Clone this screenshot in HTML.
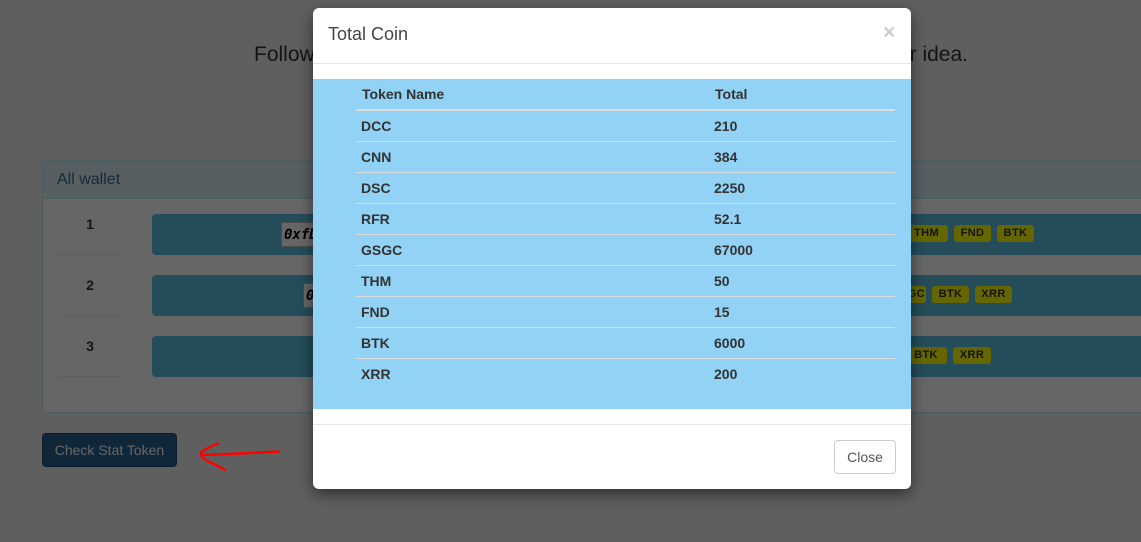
<!DOCTYPE html>
<html>
<head>
<meta charset="utf-8">
<style>
html,body{margin:0;padding:0;width:1141px;height:542px;overflow:hidden;background:#eee;font-family:"Liberation Sans",sans-serif;}
.a{position:absolute;white-space:nowrap}
.panel{left:42px;top:160px;width:1120px;height:253px;background:#fff;border:1px solid #bce8f1;border-radius:4px;overflow:hidden;box-sizing:border-box}
.phead{left:0;top:0;width:100%;height:38px;background:#d9edf7;border-bottom:1px solid #bce8f1;color:#31708f;font-size:16px;line-height:37px;padding-left:14px;box-sizing:border-box}
.bar{left:152px;width:1000px;height:41px;background:#5bc0de;border-radius:4px}
.num{left:58px;width:64px;text-align:center;font-size:14px;font-weight:bold;color:#333;line-height:20px}
.sep{left:58px;width:64px;height:1px;background:#eee}
.addr{height:25px;background:#fff;border:1px solid #bbb;box-sizing:border-box;font-family:"DejaVu Sans Mono","Liberation Mono",monospace;font-weight:bold;font-style:italic;font-size:14px;line-height:24px;color:#000;padding-left:2px;width:60px;overflow:hidden}
.badge{height:17px;background:#ff0;border-radius:3px;font-size:11px;font-weight:bold;line-height:17px;color:#333;text-align:center;letter-spacing:.4px}
.btn{left:42px;top:433px;width:135px;height:34px;background:#286090;border:1px solid #204d74;border-radius:4px;color:#fff;font-size:14px;line-height:32px;text-align:center;box-sizing:border-box}
.backdrop{left:0;top:0;width:1141px;height:542px;background:rgba(0,0,0,.6)}
.modal{left:313px;top:8px;width:598px;height:481px;background:#fff;border-radius:6px;box-shadow:0 5px 15px rgba(0,0,0,.5);overflow:hidden}
.title{left:15px;top:15px;font-size:18px;line-height:23px;color:#444}
.x{left:570px;top:13px;font-size:21px;font-weight:bold;color:#ccc;line-height:23px}
.hr{left:0;width:598px;height:1px;background:#e5e5e5}
.blue{left:0;top:71px;width:598px;height:330px;background:#92d2f5}
.cell{font-size:14px;font-weight:bold;color:#333;line-height:20px}
.line{left:43px;width:539px;height:1px;background:#ddd}
.close{left:521px;top:432px;width:62px;height:34px;border:1px solid #ccc;border-radius:4px;font-size:14px;color:#555;line-height:32px;text-align:center;box-sizing:border-box;background:#fff}
</style>
</head>
<body>
<div class="a" style="left:254px;top:42px;font-size:21px;line-height:26px;color:#333;width:714px">Following the token <span style="float:right">for your idea.</span></div>

<div class="a panel"><div class="a phead">All wallet</div></div>

<div class="a bar" style="top:214px"></div>
<div class="a bar" style="top:275px"></div>
<div class="a bar" style="top:336px"></div>

<div class="a num" style="top:214px">1</div>
<div class="a num" style="top:275px">2</div>
<div class="a num" style="top:336px">3</div>
<div class="a sep" style="top:254px"></div>
<div class="a sep" style="top:315px"></div>
<div class="a sep" style="top:376px"></div>

<div class="a addr" style="left:281px;top:222px">0xfD</div>
<div class="a addr" style="left:303px;top:283px">0x</div>

<div class="a badge" style="left:905px;top:225px;width:43px">THM</div>
<div class="a badge" style="left:954px;top:225px;width:37px">FND</div>
<div class="a badge" style="left:997px;top:225px;width:37px">BTK</div>
<div class="a badge" style="left:890px;top:286px;width:36px">GSGC</div>
<div class="a badge" style="left:932px;top:286px;width:37px">BTK</div>
<div class="a badge" style="left:975px;top:286px;width:37px">XRR</div>
<div class="a badge" style="left:905px;top:347px;width:42px">BTK</div>
<div class="a badge" style="left:953px;top:347px;width:38px">XRR</div>

<div class="a btn">Check Stat Token</div>

<div class="a backdrop"></div>

<svg class="a" style="left:190px;top:430px" width="100" height="50" viewBox="0 0 100 50">
<path d="M89 21.5 L60 23 L13 25 M28 13.5 C22 15 17 19 12 21.5 C10 23 11 26 13 28 C16 31 20 32 24 34 C28 36 32 38 35 40" fill="none" stroke="#ff0000" stroke-width="2.4" stroke-linecap="round" stroke-linejoin="round"/>
</svg>

<div class="a modal">
  <div class="a title">Total Coin</div>
  <div class="a x">×</div>
  <div class="a hr" style="top:55px"></div>
  <div class="a blue"></div>

  <div class="a cell" style="left:49px;top:76px">Token Name</div>
  <div class="a cell" style="left:402px;top:76px">Total</div>
  <div class="a line" style="top:101px;height:2px"></div>

  <div class="a cell" style="left:48px;top:108px">DCC</div><div class="a cell" style="left:401px;top:108px">210</div>
  <div class="a line" style="top:133px"></div>
  <div class="a cell" style="left:48px;top:139px">CNN</div><div class="a cell" style="left:401px;top:139px">384</div>
  <div class="a line" style="top:164px"></div>
  <div class="a cell" style="left:48px;top:170px">DSC</div><div class="a cell" style="left:401px;top:170px">2250</div>
  <div class="a line" style="top:195px"></div>
  <div class="a cell" style="left:48px;top:201px">RFR</div><div class="a cell" style="left:401px;top:201px">52.1</div>
  <div class="a line" style="top:226px"></div>
  <div class="a cell" style="left:48px;top:232px">GSGC</div><div class="a cell" style="left:401px;top:232px">67000</div>
  <div class="a line" style="top:257px"></div>
  <div class="a cell" style="left:48px;top:263px">THM</div><div class="a cell" style="left:401px;top:263px">50</div>
  <div class="a line" style="top:288px"></div>
  <div class="a cell" style="left:48px;top:294px">FND</div><div class="a cell" style="left:401px;top:294px">15</div>
  <div class="a line" style="top:319px"></div>
  <div class="a cell" style="left:48px;top:325px">BTK</div><div class="a cell" style="left:401px;top:325px">6000</div>
  <div class="a line" style="top:350px"></div>
  <div class="a cell" style="left:48px;top:356px">XRR</div><div class="a cell" style="left:401px;top:356px">200</div>

  <div class="a hr" style="top:416px"></div>
  <div class="a close">Close</div>
</div>
</body>
</html>
